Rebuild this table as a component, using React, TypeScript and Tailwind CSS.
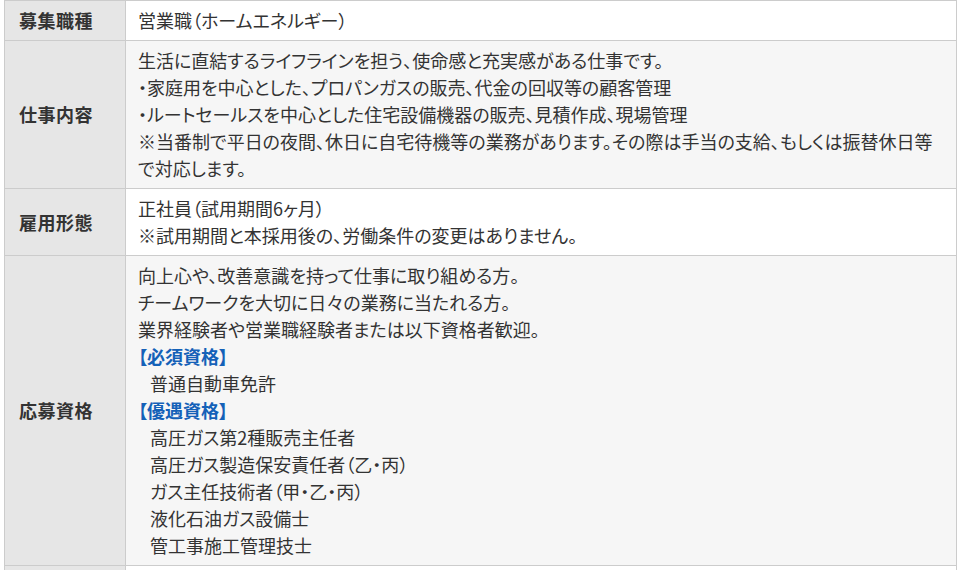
import React from "react";

type Row = { label: string; lines: React.ReactNode[] };

const Heading = ({ children }: { children: React.ReactNode }) => (
  <div className="font-bold text-[#1461b8]">{children}</div>
);

const Item = ({ children }: { children: React.ReactNode }) => (
  <div className="pl-3">{children}</div>
);

const rows: Row[] = [
  { label: "募集職種", lines: ["営業職（ホームエネルギー）"] },
  {
    label: "仕事内容",
    lines: [
      "生活に直結するライフラインを担う、使命感と充実感がある仕事です。",
      "・家庭用を中心とした、プロパンガスの販売、代金の回収等の顧客管理",
      "・ルートセールスを中心とした住宅設備機器の販売、見積作成、現場管理",
      "※当番制で平日の夜間、休日に自宅待機等の業務があります。その際は手当の支給、もしくは振替休日等",
      "で対応します。",
    ],
  },
  {
    label: "雇用形態",
    lines: ["正社員（試用期間6ヶ月）", "※試用期間と本採用後の、労働条件の変更はありません。"],
  },
  {
    label: "応募資格",
    lines: [
      "向上心や、改善意識を持って仕事に取り組める方。",
      "チームワークを大切に日々の業務に当たれる方。",
      "業界経験者や営業職経験者または以下資格者歓迎。",
      <Heading key="h1">【必須資格】</Heading>,
      <Item key="i1">普通自動車免許</Item>,
      <Heading key="h2">【優遇資格】</Heading>,
      <Item key="i2">高圧ガス第2種販売主任者</Item>,
      <Item key="i3">高圧ガス製造保安責任者（乙・丙）</Item>,
      <Item key="i4">ガス主任技術者（甲・乙・丙）</Item>,
      <Item key="i5">液化石油ガス設備士</Item>,
      <Item key="i6">管工事施工管理技士</Item>,
    ],
  },
  { label: "", lines: [""] },
];

export default function App() {
  return (
    <div
      className="min-h-[570px] bg-white pl-[4px] text-[18px] leading-[27px] text-[#333] [font-feature-settings:'palt']"
      style={{ fontFamily: '"Noto Sans CJK JP", "Noto Sans", sans-serif' }}
    >
      <div className="grid w-[953px] grid-cols-[121px_1fr] border-l border-t border-[#cccccc]">
        {rows.map((row, i) => (
          <React.Fragment key={i}>
            <div className="flex items-center border-b border-r border-[#cccccc] bg-[#e6e6e6] pl-[14px] font-bold tracking-[0.5px]">
              {row.label}
            </div>
            <div
              className={
                "border-b border-r border-[#cccccc] px-3 py-[6px] whitespace-nowrap " +
                (i % 2 === 1 ? "bg-[#f6f6f6]" : "bg-white")
              }
            >
              {row.lines.map((line, j) =>
                typeof line === "string" ? (
                  <div key={j} className="min-h-[27px]">
                    {line}
                  </div>
                ) : (
                  line
                )
              )}
            </div>
          </React.Fragment>
        ))}
      </div>
    </div>
  );
}
